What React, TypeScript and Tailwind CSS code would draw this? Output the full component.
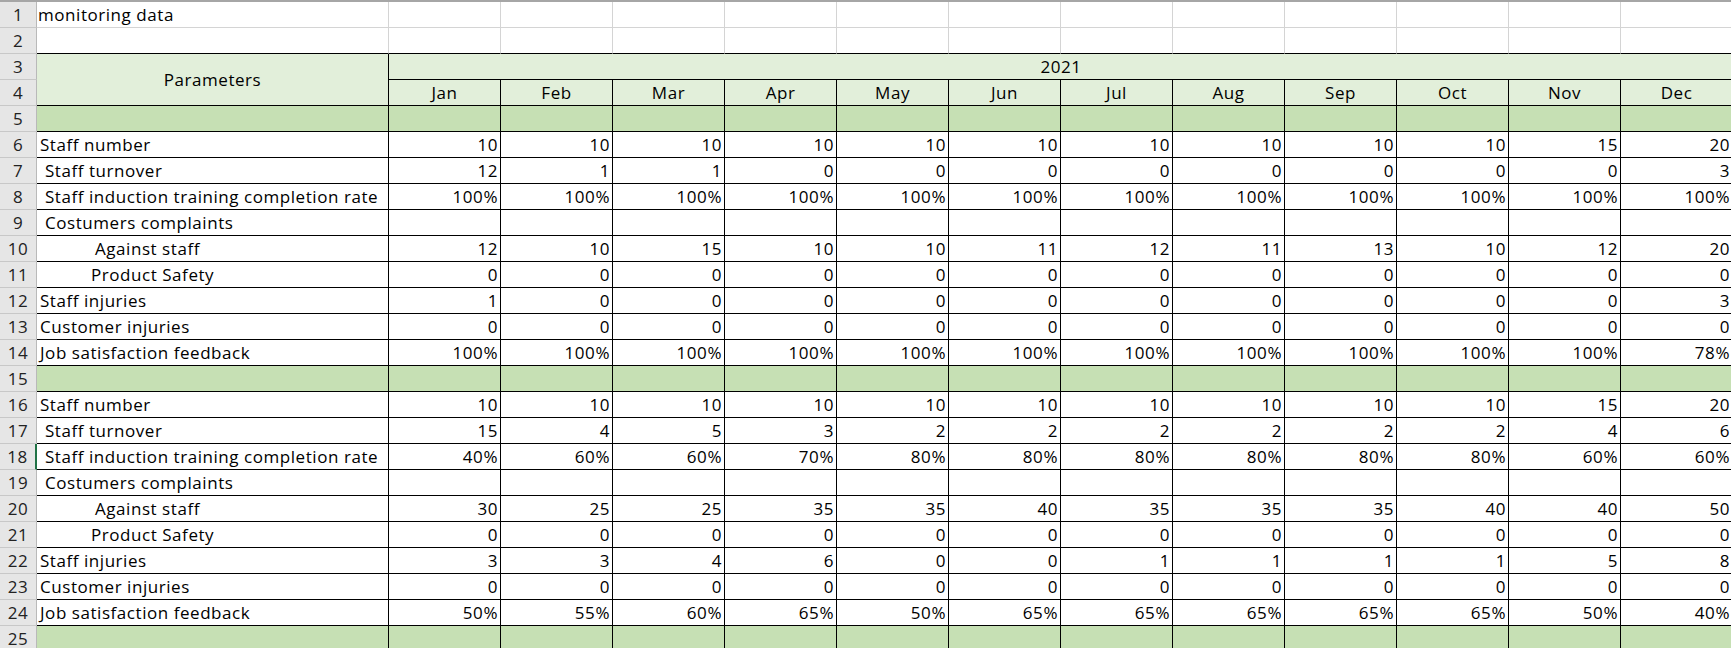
import React from "react";

// Spreadsheet look-alike: row numbers, a label column and twelve month columns
const MONTHS = ["Jan", "Feb", "Mar", "Apr", "May", "Jun", "Jul", "Aug", "Sep", "Oct", "Nov", "Dec"];

type DataRow = {
  n: number;
  label: string;
  indent: string; // left padding class for the label cell
  values?: string[];
};

const rep = (v: string) => Array.from({ length: 12 }, () => v);

const BLOCK_ONE: DataRow[] = [
  { n: 6, label: "Staff number", indent: "pl-[3px]", values: rep("10").map((v, i) => (i === 10 ? "15" : i === 11 ? "20" : v)) },
  { n: 7, label: "Staff turnover", indent: "pl-[8px]", values: ["12", "1", "1", "0", "0", "0", "0", "0", "0", "0", "0", "3"] },
  { n: 8, label: "Staff induction training completion rate", indent: "pl-[8px]", values: rep("100%") },
  { n: 9, label: "Costumers complaints", indent: "pl-[8px]" },
  { n: 10, label: "Against staff", indent: "pl-[58px]", values: ["12", "10", "15", "10", "10", "11", "12", "11", "13", "10", "12", "20"] },
  { n: 11, label: "Product Safety", indent: "pl-[54px]", values: rep("0") },
  { n: 12, label: "Staff injuries", indent: "pl-[3px]", values: ["1", "0", "0", "0", "0", "0", "0", "0", "0", "0", "0", "3"] },
  { n: 13, label: "Customer injuries", indent: "pl-[3px]", values: rep("0") },
  { n: 14, label: "Job satisfaction feedback", indent: "pl-[3px]", values: [...rep("100%").slice(0, 11), "78%"] },
];

const BLOCK_TWO: DataRow[] = [
  { n: 16, label: "Staff number", indent: "pl-[3px]", values: rep("10").map((v, i) => (i === 10 ? "15" : i === 11 ? "20" : v)) },
  { n: 17, label: "Staff turnover", indent: "pl-[8px]", values: ["15", "4", "5", "3", "2", "2", "2", "2", "2", "2", "4", "6"] },
  { n: 18, label: "Staff induction training completion rate", indent: "pl-[8px]", values: ["40%", "60%", "60%", "70%", "80%", "80%", "80%", "80%", "80%", "80%", "60%", "60%"] },
  { n: 19, label: "Costumers complaints", indent: "pl-[8px]" },
  { n: 20, label: "Against staff", indent: "pl-[58px]", values: ["30", "25", "25", "35", "35", "40", "35", "35", "35", "40", "40", "50"] },
  { n: 21, label: "Product Safety", indent: "pl-[54px]", values: rep("0") },
  { n: 22, label: "Staff injuries", indent: "pl-[3px]", values: ["3", "3", "4", "6", "0", "0", "1", "1", "1", "1", "5", "8"] },
  { n: 23, label: "Customer injuries", indent: "pl-[3px]", values: rep("0") },
  { n: 24, label: "Job satisfaction feedback", indent: "pl-[3px]", values: ["50%", "55%", "60%", "65%", "50%", "65%", "65%", "65%", "65%", "65%", "50%", "40%"] },
];

const RowHead = ({ n, active, last }: { n: number; active?: boolean; last?: boolean }) => (
  <div
    className={
      "w-[37px] shrink-0 h-full flex items-end justify-center bg-[#e6e6e6] border-b border-b-[#c8c8c8] text-[#222] tracking-[0.5px] " +
      (active ? "border-r-2 border-r-[#217346] " : "border-r border-r-[#b9b9b9] ") +
      (last ? "pb-[4px] leading-[16px]" : "pb-[1px]")
    }
  >
    {n}
  </div>
);

const GreenRow = ({ n, last }: { n: number; last?: boolean }) => (
  <div className="flex h-[26px]">
    <RowHead n={n} last={last} />
    <div className="w-[352px] shrink-0 bg-[#c6e0b4] border-r border-b border-black" />
    {MONTHS.map((m) => (
      <div key={m} className="w-[112px] shrink-0 bg-[#c6e0b4] border-r border-b border-black" />
    ))}
  </div>
);

const Row = ({ row }: { row: DataRow }) => (
  <div className="flex h-[26px]">
    <RowHead n={row.n} active={row.n === 18} />
    <div className={"w-[352px] shrink-0 flex items-end pb-[1px] border-r border-b border-black whitespace-nowrap " + row.indent}>
      {row.label}
    </div>
    {MONTHS.map((m, i) => (
      <div key={m} className="w-[112px] shrink-0 flex items-end justify-end pr-[2px] pb-[1px] border-r border-b border-black">
        {row.values ? row.values[i] : ""}
      </div>
    ))}
  </div>
);

export default function App() {
  return (
    <div
      className="w-[1731px] h-[648px] overflow-hidden bg-white text-black text-[17px] leading-[22px] tracking-[0.55px] border-t-2 border-t-[#a6a6a6]"
      style={{ fontFamily: "'Open Sans', Lato, sans-serif" }}
    >
      {/* rows 1-2: plain sheet grid */}
      <div className="flex h-[26px]">
        <RowHead n={1} />
        <div className="w-[352px] shrink-0 flex items-end pl-[1px] pb-[1px] border-r border-b border-[#d4d4d4] whitespace-nowrap">
          monitoring data
        </div>
        {MONTHS.map((m) => (
          <div key={m} className="w-[112px] shrink-0 border-r border-b border-[#d4d4d4]" />
        ))}
      </div>
      <div className="flex h-[26px]">
        <RowHead n={2} />
        <div className="w-[352px] shrink-0 border-r border-[#d4d4d4] border-b border-b-black" />
        {MONTHS.map((m) => (
          <div key={m} className="w-[112px] shrink-0 border-r border-[#d4d4d4] border-b border-b-black" />
        ))}
      </div>

      {/* rows 3-4: header with merged cells */}
      <div className="flex h-[52px]">
        <div className="w-[37px] shrink-0 flex flex-col">
          <div className="h-[26px]">
            <RowHead n={3} />
          </div>
          <div className="h-[26px]">
            <RowHead n={4} />
          </div>
        </div>
        <div className="w-[352px] shrink-0 flex items-center justify-center bg-[#e2efda] border-r border-b border-black">
          Parameters
        </div>
        <div className="flex flex-col">
          <div className="h-[26px] w-[1344px] flex items-end justify-center pb-[1px] bg-[#e2efda] border-b border-black">
            2021
          </div>
          <div className="flex h-[26px]">
            {MONTHS.map((m) => (
              <div key={m} className="w-[112px] shrink-0 flex items-end justify-center pb-[1px] bg-[#e2efda] border-r border-b border-black">
                {m}
              </div>
            ))}
          </div>
        </div>
      </div>

      <GreenRow n={5} />
      {BLOCK_ONE.map((r) => (
        <Row key={r.n} row={r} />
      ))}
      <GreenRow n={15} />
      {BLOCK_TWO.map((r) => (
        <Row key={r.n} row={r} />
      ))}
      <GreenRow n={25} last />
    </div>
  );
}
